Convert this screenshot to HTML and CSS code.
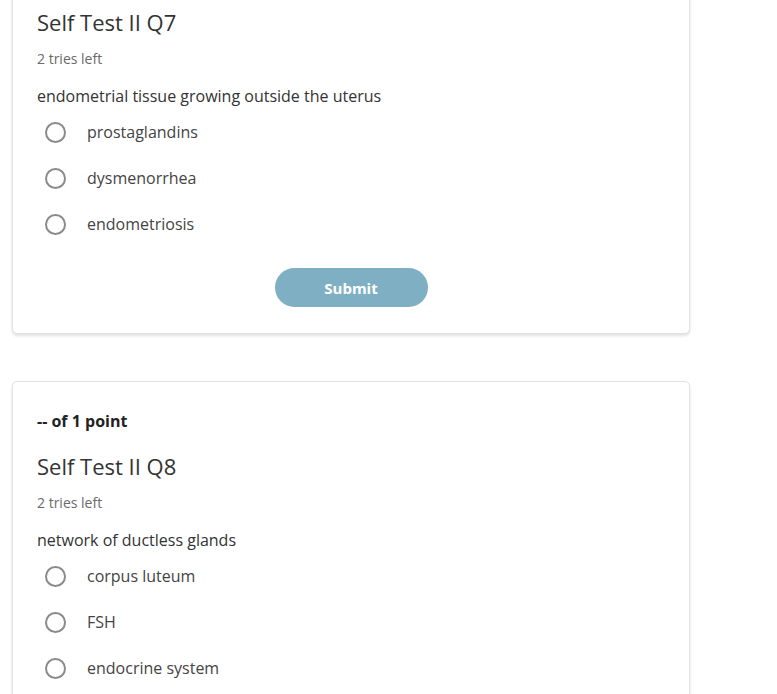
FILE: index.html
```html
<!DOCTYPE html>
<html lang="en">
<head>
    <meta charset="UTF-8">
    <meta name="viewport" content="width=device-width, initial-scale=1.0">
    <title>Self Test II</title>
    <link rel="stylesheet" href="styles.css">
</head>
<body>

    <div class="quiz-list">

        <div class="question-card">
            <div class="points">-- of 1 point</div>
            <h2 class="q-title">Self Test II Q7</h2>
            <div class="tries">2 tries left</div>
            <p class="q-text">endometrial tissue growing outside the uterus</p>
            <ul class="choices">
                <li><span class="radio"></span>prostaglandins</li>
                <li><span class="radio"></span>dysmenorrhea</li>
                <li><span class="radio"></span>endometriosis</li>
            </ul>
            <div class="actions">
                <button type="button" class="submit-btn">Submit</button>
            </div>
        </div>

        <div class="question-card">
            <div class="points">-- of 1 point</div>
            <h2 class="q-title">Self Test II Q8</h2>
            <div class="tries">2 tries left</div>
            <p class="q-text">network of ductless glands</p>
            <ul class="choices">
                <li><span class="radio"></span>corpus luteum</li>
                <li><span class="radio"></span>FSH</li>
                <li><span class="radio"></span>endocrine system</li>
            </ul>
            <div class="actions">
                <button type="button" class="submit-btn">Submit</button>
            </div>
        </div>

    </div>

</body>
</html>
```

FILE: styles.css
```css
body {
    font-family: 'Open Sans', 'Noto Sans', sans-serif;
    background: #fff;
    color: #333;
    margin: 0;
}

/* list of cards, scrolled a little past the first header */
.quiz-list {
    width: 678px;
    margin: -63px 0 0 12px;
    display: flex;
    flex-direction: column;
    gap: 47px;
}

.question-card {
    background: #fff;
    border: 1px solid #e2e2e2;
    border-radius: 5px;
    box-shadow: 0 2px 3px rgba(0, 0, 0, 0.12);
    padding: 28px 24px 26px;
}

.points {
    font-size: 16px;
    line-height: 22px;
    font-weight: bold;
    color: #222;
}

.q-title {
    margin: 19px 0 0;
    font-size: 22px;
    line-height: 30px;
    font-weight: normal;
    color: #333;
}

.tries {
    margin-top: 12px;
    font-size: 14px;
    line-height: 20px;
    color: #6a6a6a;
}

.q-text {
    margin: 16px 0 0;
    font-size: 16px;
    line-height: 22px;
    color: #333;
}

.choices {
    list-style: none;
    margin: 2px 0 0;
    padding: 0 0 0 8px;
}

.choices li {
    display: flex;
    align-items: center;
    height: 46px;
    font-size: 16px;
    color: #444;
}

.radio {
    width: 17px;
    height: 17px;
    border: 2px solid #8a8a8a;
    border-radius: 50%;
    margin-right: 21px;
}

.actions {
    display: flex;
    justify-content: center;
    margin-top: 21px;
}

.submit-btn {
    width: 153px;
    height: 39px;
    border: none;
    border-radius: 20px;
    background: #7fafc2;
    color: #fff;
    font-family: inherit;
    font-size: 15px;
    font-weight: bold;
    cursor: pointer;
}
```
